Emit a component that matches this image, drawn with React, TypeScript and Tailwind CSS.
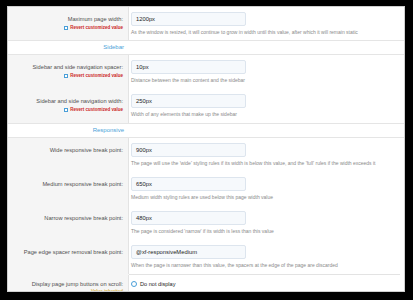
import React from 'react'

const font = { fontFamily: '"Liberation Sans", Arial, sans-serif' }

type RowProps = {
  label: string
  value: string
  explain: string
  revert?: boolean
  first?: boolean
}

function Row({ label, value, explain, revert, first }: RowProps) {
  return (
    <div className={`flex ${first ? 'h-[33px]' : 'h-[34px]'}`}>
      <div className="w-[121px] shrink-0 border-r border-[#e3e3e3] bg-[#f5f5f5] pr-[5px] pt-[7px] text-right">
        <div className="text-[5.7px] leading-[10px] text-[#505050]">{label}</div>
        {revert && (
          <div className="mt-[1px] flex items-center justify-end gap-[2px] leading-[6px]">
            <span className="inline-block h-[4px] w-[4px] border border-[#4a9fd8] bg-white" />
            <span className="text-[4.5px] font-bold text-[#cc1e1e]">Revert customized value</span>
          </div>
        )}
      </div>
      <div className="flex-1 pl-[2px] pt-[5px]">
        <div className="flex h-[14px] w-[115px] items-center rounded-[2px] border border-[#dde5ee] bg-[#f6f9fc] pl-[4px] text-[5.8px] text-[#1d1d1d]">
          {value}
        </div>
        <div className="mt-[3px] whitespace-nowrap text-[5px] leading-[6px] text-[#8a8a8a]">{explain}</div>
      </div>
    </div>
  )
}

function Header({ title }: { title: string }) {
  return (
    <div className="h-[15px] border-y border-[#e5e5e5] bg-white">
      <div className="w-[121px] pr-[5px] text-right text-[6px] leading-[13px] text-[#4a9fd8]">{title}</div>
    </div>
  )
}

export default function App() {
  return (
    <div className="h-[300px] w-[413px] overflow-hidden bg-black pl-[7px] pt-[6px]" style={font}>
      <div className="h-[286px] w-[398px] overflow-hidden border border-[#cfcfcf] bg-white">
        <Row
          first
          revert
          label="Maximum page width:"
          value="1200px"
          explain="As the window is resized, it will continue to grow in width until this value, after which it will remain static"
        />
        <Header title="Sidebar" />
        <Row
          revert
          label="Sidebar and side navigation spacer:"
          value="10px"
          explain="Distance between the main content and the sidebar"
        />
        <Row
          revert
          label="Sidebar and side navigation width:"
          value="250px"
          explain="Width of any elements that make up the sidebar"
        />
        <Header title="Responsive" />
        <Row
          label="Wide responsive break point:"
          value="900px"
          explain="The page will use the 'wide' styling rules if its width is below this value, and the 'full' rules if the width exceeds it"
        />
        <Row
          label="Medium responsive break point:"
          value="650px"
          explain="Medium width styling rules are used below this page width value"
        />
        <Row
          label="Narrow responsive break point:"
          value="480px"
          explain="The page is considered 'narrow' if its width is less than this value"
        />
        <Row
          label="Page edge spacer removal break point:"
          value="@xf-responsiveMedium"
          explain="When the page is narrower than this value, the spacers at the edge of the page are discarded"
        />
        <div className="flex">
          <div className="w-[121px] shrink-0 bg-[#f5f5f5]" />
          <div className="flex-1 pr-[4px]">
            <div className="h-px bg-[#e3e3e3]" />
          </div>
        </div>
        <div className="flex h-[30px]">
          <div className="w-[121px] shrink-0 border-r border-[#e3e3e3] bg-[#f5f5f5] pr-[5px] pt-[4px] text-right">
            <div className="text-[5.7px] leading-[10px] text-[#505050]">Display page jump buttons on scroll:</div>
            <div className="text-[4.5px] font-bold leading-[6px] text-[#d9b44a]">Value inherited</div>
          </div>
          <div className="flex-1 pl-[2px] pt-[4px]">
            <div className="flex h-[10px] items-center gap-[3px]">
              <span className="inline-block h-[6px] w-[6px] rounded-full border border-[#4a9fd8] bg-white" />
              <span className="text-[5.6px] text-[#1d1d1d]">Do not display</span>
            </div>
            <div className="mt-[1px] flex h-[10px] items-center gap-[3px]">
              <span className="inline-block h-[6px] w-[6px] rounded-full border border-[#4a9fd8] bg-white" />
              <span className="text-[5.6px] text-[#1d1d1d]">Display</span>
            </div>
          </div>
        </div>
      </div>
    </div>
  )
}
